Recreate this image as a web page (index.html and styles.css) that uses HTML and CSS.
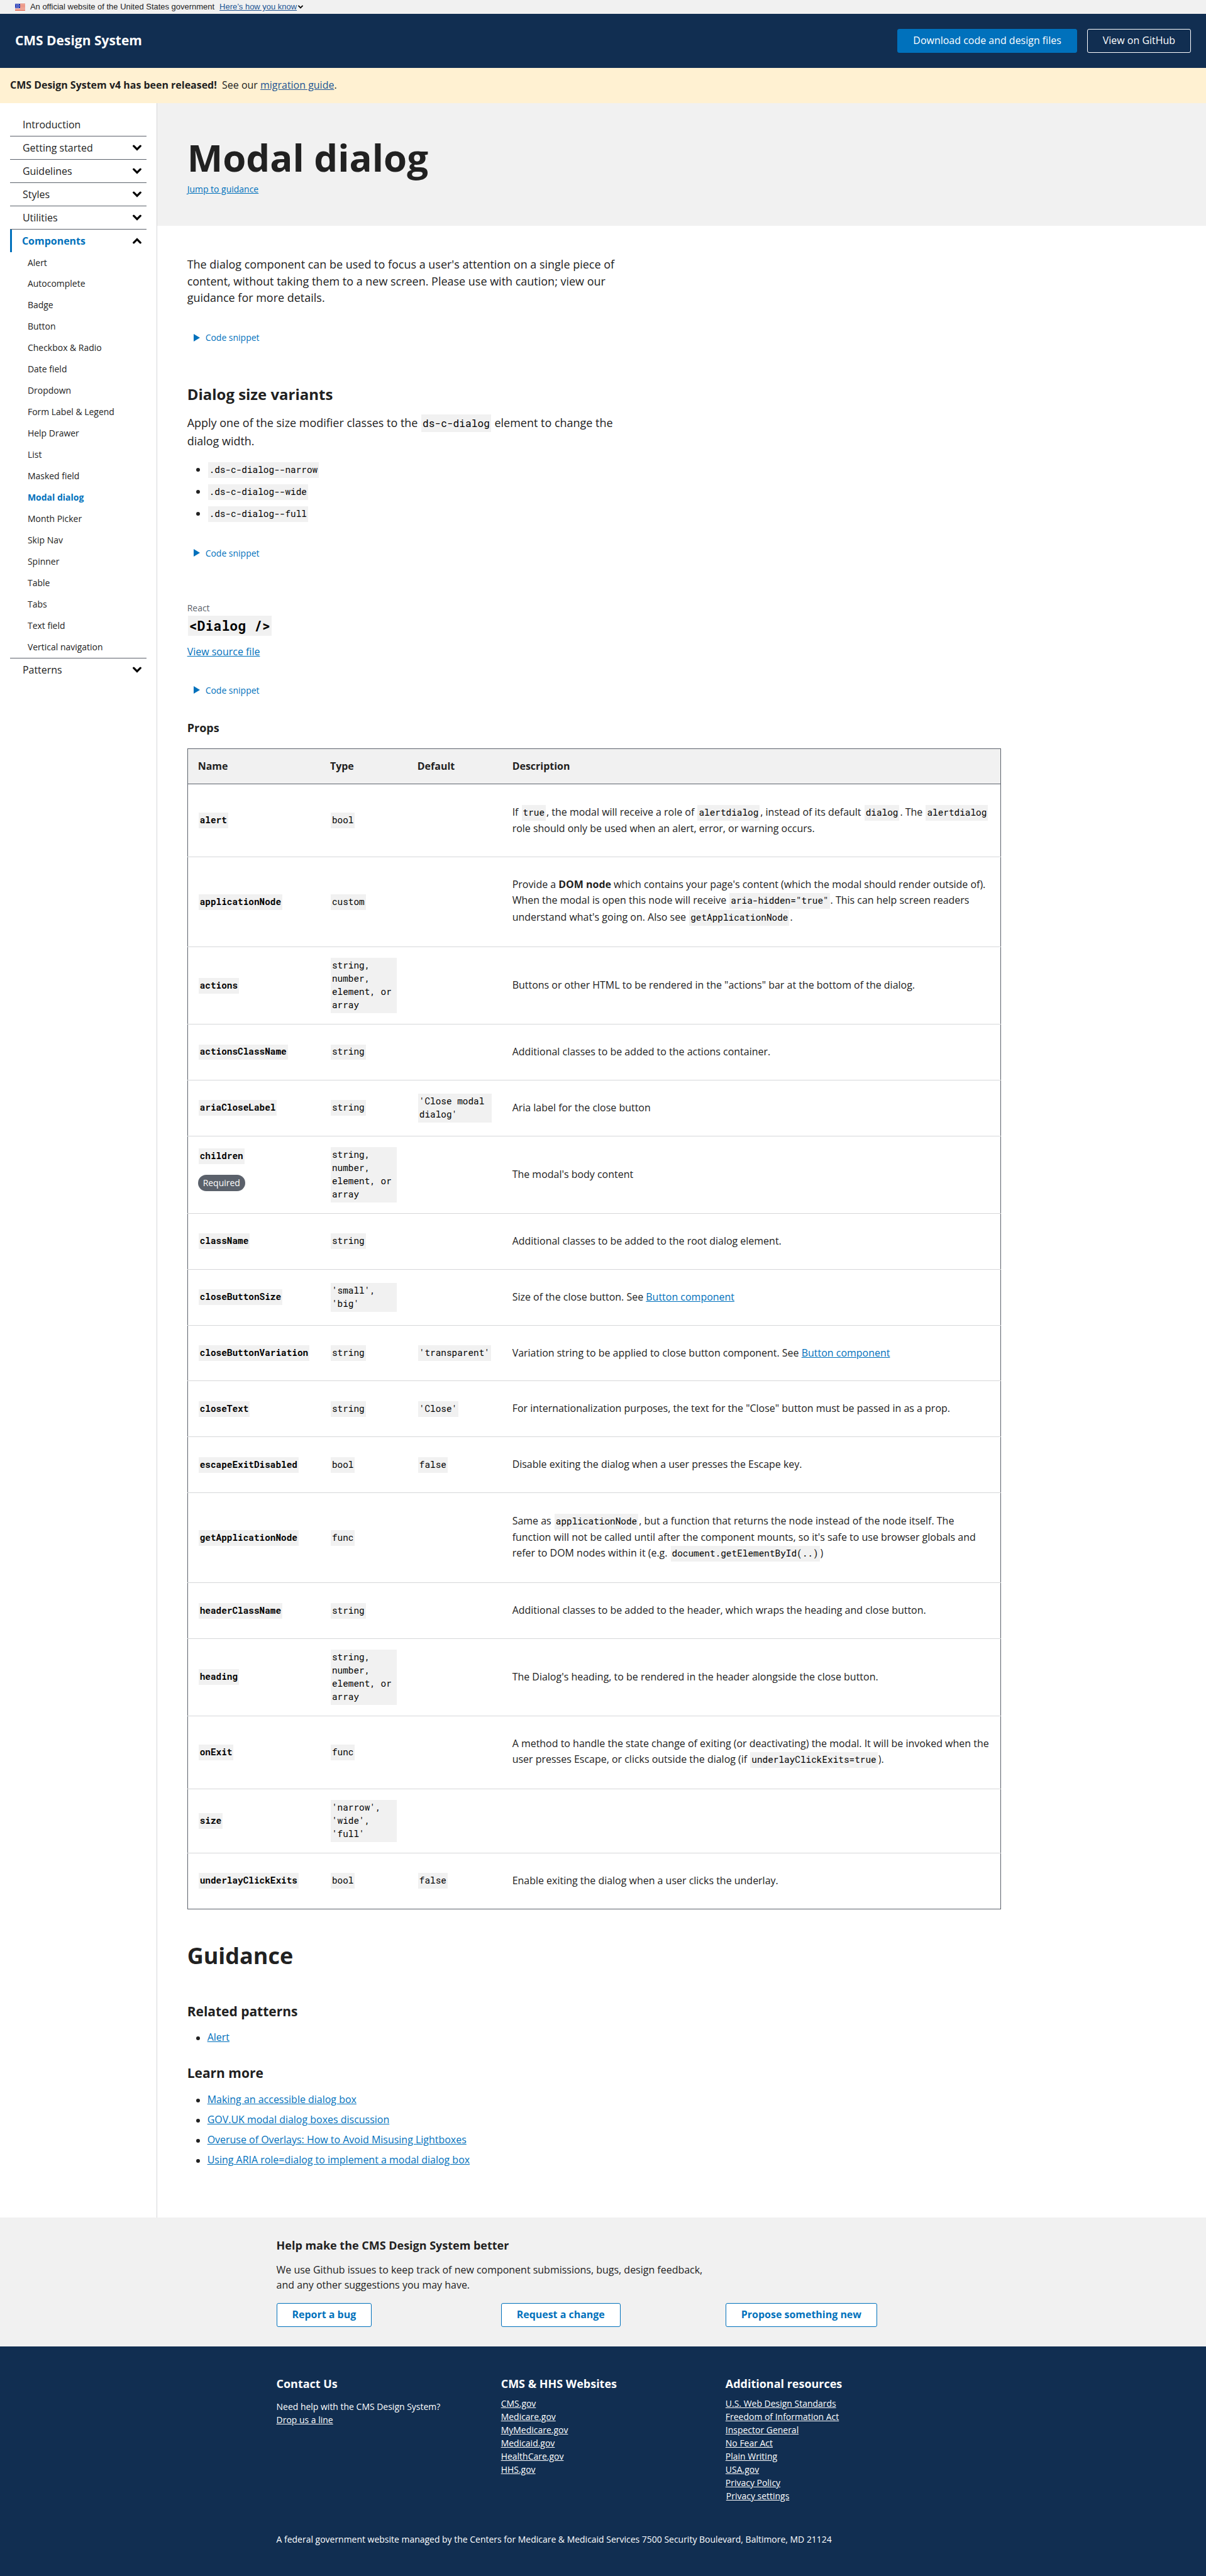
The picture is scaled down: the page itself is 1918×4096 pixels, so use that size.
FILE: index.html
```html
<!DOCTYPE html>
<html lang="en">
<head>
<meta charset="utf-8">
<title>Modal dialog - CMS Design System</title>
<link rel="stylesheet" href="styles.css">
</head>
<body>
<svg class="sprite" aria-hidden="true">
  <symbol id="chevron" viewBox="0 0 14 10"><path d="M1.7 2.2 7 7.5l5.3-5.3" fill="none" stroke="#000" stroke-width="3.2" stroke-linecap="round" stroke-linejoin="miter"/></symbol>
  <symbol id="caret" viewBox="0 0 10 12"><path d="M0 0 10 6 0 12Z" fill="#0071bc"/></symbol>
</svg>

<div class="gov">
  <svg class="flag" viewBox="0 0 16 11"><path fill="#fff" d="M0 0h16v11H0z"/><path fill="#db3e1f" d="M0 0h16v1H0zM0 2h16v1H0zM0 4h16v1H0zM0 6h16v1H0zM0 8h16v1H0zM0 10h16v1H0z"/><path fill="#1e33b1" d="M0 0h8v7H0z"/><path fill="#fff" d="M1 1h1v1H1zM3 1h1v1H3zM5 1h1v1H5zM2 3h1v1H2zM4 3h1v1H4zM6 3h1v1H6zM1 5h1v1H1zM3 5h1v1H3zM5 5h1v1H5z"/></svg>
  <span class="gov-text">An official website of the United States government</span>
  <a class="gov-link" href="#">Here’s how you know</a>
  <svg class="gov-chevron"><use href="#chevron"/></svg>
</div>

<header class="site-header">
  <div class="brand">CMS Design System</div>
  <div class="header-actions">
    <a class="btn btn-primary" href="#">Download code and design files</a>
    <a class="btn btn-inverse" href="#">View on GitHub</a>
  </div>
</header>

<div class="notice"><b>CMS Design System v4 has been released!</b>&nbsp; See our <a href="#">migration guide</a>.</div>

<div class="layout">
  <nav class="sidebar">
    <ul class="nav">
      <li class="nav-item">Introduction</li>
      <li class="nav-item">Getting started<svg class="chevron"><use href="#chevron"/></svg></li>
      <li class="nav-item">Guidelines<svg class="chevron"><use href="#chevron"/></svg></li>
      <li class="nav-item">Styles<svg class="chevron"><use href="#chevron"/></svg></li>
      <li class="nav-item">Utilities<svg class="chevron"><use href="#chevron"/></svg></li>
      <li class="nav-item current">Components<svg class="chevron up"><use href="#chevron"/></svg></li>
    </ul>
    <ul class="subnav">
      <li>Alert</li><li>Autocomplete</li><li>Badge</li><li>Button</li><li>Checkbox &amp; Radio</li><li>Date field</li><li>Dropdown</li><li>Form Label &amp; Legend</li><li>Help Drawer</li><li>List</li><li>Masked field</li><li class="selected">Modal dialog</li><li>Month Picker</li><li>Skip Nav</li><li>Spinner</li><li>Table</li><li>Tabs</li><li>Text field</li><li>Vertical navigation</li>
    </ul>
    <div class="nav-item last">Patterns<svg class="chevron"><use href="#chevron"/></svg></div>
  </nav>

  <main class="main">
    <div class="page-header">
      <h1>Modal dialog</h1>
      <a class="jump" href="#">Jump to guidance</a>
    </div>
    <div class="content">
      <p class="lead">The dialog component can be used to focus a user's attention on a single piece of content, without taking them to a new screen. Please use with caution; view our guidance for more details.</p>
      <div class="snippet snippet-a"><svg><use href="#caret"/></svg>Code snippet</div>

      <h2 class="variants">Dialog size variants</h2>
      <p class="lead">Apply one of the size modifier classes to the <code>ds-c-dialog</code> element to change the dialog width.</p>
      <ul class="list list-code">
        <li><code>.ds-c-dialog--narrow</code></li>
        <li><code>.ds-c-dialog--wide</code></li>
        <li><code>.ds-c-dialog--full</code></li>
      </ul>
      <div class="snippet snippet-b"><svg><use href="#caret"/></svg>Code snippet</div>

      <div class="framework">React</div>
      <h2 class="component"><code>&lt;Dialog /&gt;</code></h2>
      <div class="source"><a href="#">View source file</a></div>
      <div class="snippet snippet-c"><svg><use href="#caret"/></svg>Code snippet</div>

      <h3 class="props-title">Props</h3>
      <table class="props">
        <colgroup><col class="c-name"><col class="c-type"><col class="c-default"><col></colgroup>
        <thead><tr><th>Name</th><th>Type</th><th>Default</th><th>Description</th></tr></thead>
        <tbody>
          <tr class="r2"><td><code>alert</code></td><td><code>bool</code></td><td></td><td>If <code>true</code>, the modal will receive a role of <code>alertdialog</code>, instead of its default <code>dialog</code>. The <code>alertdialog</code> role should only be used when an alert, error, or warning occurs.</td></tr>
          <tr class="r3"><td><code>applicationNode</code></td><td><code>custom</code></td><td></td><td>Provide a <b>DOM node</b> which contains your page's content (which the modal should render outside of). When the modal is open this node will receive <code>aria-hidden="true"</code>. This can help screen readers understand what's going on. Also see <code>getApplicationNode</code>.</td></tr>
          <tr class="t4"><td><code>actions</code></td><td><code>string, number, element, or array</code></td><td></td><td>Buttons or other HTML to be rendered in the "actions" bar at the bottom of the dialog.</td></tr>
          <tr><td><code>actionsClassName</code></td><td><code>string</code></td><td></td><td>Additional classes to be added to the actions container.</td></tr>
          <tr><td><code>ariaCloseLabel</code></td><td><code>string</code></td><td><code>'Close modal dialog'</code></td><td>Aria label for the close button</td></tr>
          <tr class="t4"><td><code>children</code><div class="badge-row"><span class="badge">Required</span></div></td><td><code>string, number, element, or array</code></td><td></td><td>The modal's body content</td></tr>
          <tr><td><code>className</code></td><td><code>string</code></td><td></td><td>Additional classes to be added to the root dialog element.</td></tr>
          <tr><td><code>closeButtonSize</code></td><td><code>'small', 'big'</code></td><td></td><td>Size of the close button. See <a href="#">Button component</a></td></tr>
          <tr><td><code>closeButtonVariation</code></td><td><code>string</code></td><td><code>'transparent'</code></td><td>Variation string to be applied to close button component. See <a href="#">Button component</a></td></tr>
          <tr><td><code>closeText</code></td><td><code>string</code></td><td><code>'Close'</code></td><td>For internationalization purposes, the text for the "Close" button must be passed in as a prop.</td></tr>
          <tr><td><code>escapeExitDisabled</code></td><td><code>bool</code></td><td><code>false</code></td><td>Disable exiting the dialog when a user presses the Escape key.</td></tr>
          <tr class="r3"><td><code>getApplicationNode</code></td><td><code>func</code></td><td></td><td>Same as <code>applicationNode</code>, but a function that returns the node instead of the node itself. The function will not be called until after the component mounts, so it's safe to use browser globals and refer to DOM nodes within it (e.g. <code>document.getElementById(..)</code>)</td></tr>
          <tr><td><code>headerClassName</code></td><td><code>string</code></td><td></td><td>Additional classes to be added to the header, which wraps the heading and close button.</td></tr>
          <tr class="t4"><td><code>heading</code></td><td><code>string, number, element, or array</code></td><td></td><td>The Dialog's heading, to be rendered in the header alongside the close button.</td></tr>
          <tr class="r2"><td><code>onExit</code></td><td><code>func</code></td><td></td><td>A method to handle the state change of exiting (or deactivating) the modal. It will be invoked when the user presses Escape, or clicks outside the dialog (if <code>underlayClickExits=true</code>).</td></tr>
          <tr class="t3"><td><code>size</code></td><td><code>'narrow', 'wide', 'full'</code></td><td></td><td></td></tr>
          <tr><td><code>underlayClickExits</code></td><td><code>bool</code></td><td><code>false</code></td><td>Enable exiting the dialog when a user clicks the underlay.</td></tr>
        </tbody>
      </table>

      <h2 class="guidance">Guidance</h2>
      <h3 class="related">Related patterns</h3>
      <ul class="list"><li><a href="#">Alert</a></li></ul>
      <h3 class="learn">Learn more</h3>
      <ul class="list">
        <li><a href="#">Making an accessible dialog box</a></li>
        <li><a href="#">GOV.UK modal dialog boxes discussion</a></li>
        <li><a href="#">Overuse of Overlays: How to Avoid Misusing Lightboxes</a></li>
        <li><a href="#">Using ARIA role=dialog to implement a modal dialog box</a></li>
      </ul>
    </div>
  </main>
</div>

<section class="feedback">
  <div class="container">
    <h4>Help make the CMS Design System better</h4>
    <p>We use Github issues to keep track of new component submissions, bugs, design feedback, and any other suggestions you may have.</p>
    <div class="columns">
      <div><a class="btn btn-outline" href="#">Report a bug</a></div>
      <div><a class="btn btn-outline" href="#">Request a change</a></div>
      <div><a class="btn btn-outline" href="#">Propose something new</a></div>
    </div>
  </div>
</section>

<footer class="footer">
  <div class="container">
    <div class="columns">
      <div>
        <h4>Contact Us</h4>
        <p class="contact">Need help with the CMS Design System?<br><a href="#">Drop us a line</a></p>
      </div>
      <div>
        <h4>CMS &amp; HHS Websites</h4>
        <ul><li><a href="#">CMS.gov</a></li><li><a href="#">Medicare.gov</a></li><li><a href="#">MyMedicare.gov</a></li><li><a href="#">Medicaid.gov</a></li><li><a href="#">HealthCare.gov</a></li><li><a href="#">HHS.gov</a></li></ul>
      </div>
      <div>
        <h4>Additional resources</h4>
        <ul><li><a href="#">U.S. Web Design Standards</a></li><li><a href="#">Freedom of Information Act</a></li><li><a href="#">Inspector General</a></li><li><a href="#">No Fear Act</a></li><li><a href="#">Plain Writing</a></li><li><a href="#">USA.gov</a></li><li><a href="#">Privacy Policy</a></li><li class="settings"><a href="#">Privacy settings</a></li></ul>
      </div>
    </div>
    <p class="address">A federal government website managed by the Centers for Medicare &amp; Medicaid Services 7500 Security Boulevard, Baltimore, MD 21124</p>
  </div>
</footer>
</body>
</html>
```
FILE: styles.css
```css
* { box-sizing: border-box; }
html { zoom: 0.999; }
body { margin: 0; background: #fff; color: #212121; font: 16px/24px "Open Sans", "Noto Sans", sans-serif; overflow-x: hidden; }
h1, h2, h3, h4, p, ul { margin: 0; padding: 0; }
ul { list-style: none; }
a { color: #0071bc; }
.sprite { display: none; }

code { display: inline-block; margin: 1px; padding: 2px; background: #f1f1f1; color: #000; font-family: "Roboto Mono", "DejaVu Sans Mono", monospace; font-size: .9em; line-height: 21px; }

.gov { display: flex; align-items: center; height: 22px; padding-left: 24px; background: #f1f1f1; font: 13px/22px "Liberation Sans", Arial, sans-serif; }
.flag { width: 16px; height: 11px; margin: 1px 8px 0 0; }
.gov-text { margin-right: 8px; }
.gov-link { color: #205493; }
.gov-chevron { width: 8px; height: 6px; margin-left: 2px; }

.site-header { display: flex; align-items: center; justify-content: space-between; height: 86px; padding: 0 24px; background: #112e51; color: #fff; }
.brand { font-size: 21px; font-weight: 700; line-height: 28px; }
.header-actions { display: flex; gap: 16px; }
.btn { display: inline-block; height: 38px; padding: 0 24px; border: 1px solid; border-radius: 3px; line-height: 36px; text-decoration: none; white-space: nowrap; }
.btn-primary { background: #0071bc; border-color: #0071bc; color: #fff; }
.btn-inverse { border-color: #fff; color: #fff; }
.btn-outline { background: #fff; border-color: #0071bc; color: #0071bc; font-weight: 700; }

.notice { height: 56px; padding: 16px; background: #fff1d2; }
.notice a { color: #205493; }

.layout { display: flex; height: 3366px; }
.sidebar { flex: none; width: 250px; padding: 16px 16px 0; border-right: 1px solid #d6d7d9; }
.nav-item { display: flex; align-items: center; justify-content: space-between; height: 37px; padding: 1px 8px 0 20px; border-bottom: 1px solid #5b616b; line-height: 21px; }
.nav-item.current { height: 36px; padding-left: 16px; border-bottom: 0; border-left: 4px solid #0071bc; color: #0071bc; font-weight: 700; }
.nav-item.last { border-bottom: 0; border-top: 1px solid #5b616b; }
.chevron { width: 14px; height: 10px; }
.chevron.up { transform: rotate(180deg); }
.subnav li { height: 34px; padding-left: 28px; font-size: 14px; line-height: 34px; }
.subnav .selected { color: #0071bc; font-weight: 700; }

.main { flex: 1; min-width: 0; }
.page-header { height: 195px; padding: 48px; background: #f1f1f1; }
h1 { font-size: 60px; line-height: 78px; }
.jump { display: block; margin-top: 1px; font-size: 14px; line-height: 21px; }
.content { padding: 48px 48px 0; }
.lead { width: 700px; font-size: 18px; line-height: 27px; }
.lead code { line-height: 24px; }

.snippet { display: flex; align-items: center; gap: 9px; height: 21px; padding-left: 10px; color: #0071bc; font-size: 14px; line-height: 21px; }
.snippet svg { width: 10px; height: 12px; margin-top: -2px; }
.snippet-a { margin-top: 40px; }
.snippet-b { margin-top: 39px; }
.snippet-c { margin-top: 39px; }
.variants { margin: 64px 0 15px; font-size: 24px; line-height: 31px; }
.list li { position: relative; padding-left: 32px; }
.list li + li { margin-top: 8px; }
.list li::before { content: ""; position: absolute; left: 14px; top: 10px; width: 6px; height: 6px; border-radius: 50%; background: #212121; }
.list-code { margin-top: 19px; }
.list-code li { height: 27px; }
.framework { margin-top: 66px; color: #5b616b; font-size: 14px; line-height: 21px; }
.component { height: 34px; margin-top: 1px; font-size: 24px; line-height: 34px; }
.component code { display: block; width: max-content; line-height: 28px; }
.source { margin-top: 12px; }
.props-title { margin: 35px 0 19px; font-size: 18px; line-height: 27px; }

.props { width: 1296px; table-layout: fixed; border-collapse: collapse; border: 1px solid #5b616b; }
.c-name { width: 211px; }
.c-type { width: 139px; }
.c-default { width: 151px; }
.props th { height: 57px; padding: 1px 16px 0; background: #f1f1f1; border-bottom: 1px solid #5b616b; text-align: left; font-weight: 700; }
.props td { height: 89px; padding: 0 16px; vertical-align: middle; }
.props td + td + td + td { padding-right: 12px; }
.props tr + tr td { border-top: 1px solid #d6d7d9; }
.props td:first-child { font-weight: 700; }
.props td > code { vertical-align: baseline; }
.props .r2 td { height: 116px; }
.props .r3 td { height: 143px; }
.props .t4 td { height: 123px; }
.props .t3 td { height: 102px; }
.badge-row { display: flex; padding: 16px 0; }
.badge { height: 26px; padding: 0 8px; border-radius: 13px; background: #5b616b; color: #fff; font-size: 14px; font-weight: 400; line-height: 26px; }

.guidance { margin-top: 52px; font-size: 36px; line-height: 47px; }
.related { margin: 51px 0 16px; font-size: 21px; line-height: 27px; }
.learn { margin: 31px 0 17px; font-size: 21px; line-height: 27px; }

.container { width: 1072px; margin-left: 440px; }
.columns { display: grid; grid-template-columns: repeat(3, 357.5px); }
.feedback { height: 205px; padding-top: 31px; background: #f1f1f1; }
h4 { font-size: 18px; line-height: 27px; }
.feedback p { width: 700px; margin: 14px 0 16px; }

.footer { height: 365px; padding-top: 46px; background: #112e51; color: #fff; font-size: 14px; line-height: 21px; }
.footer a { color: #fff; }
.footer ul { margin-top: 8px; }
.footer .columns { height: 210px; }
.contact { margin-top: 13px; }
.settings { padding-left: 1px; }
.address { margin-top: 41px; }
```
